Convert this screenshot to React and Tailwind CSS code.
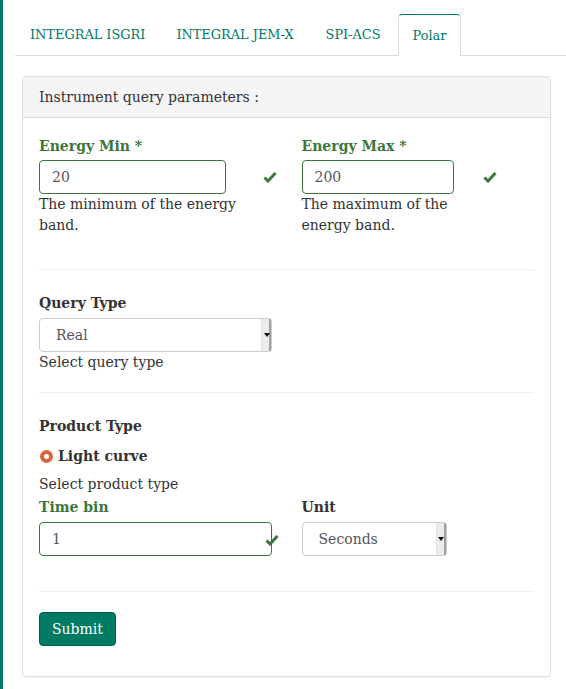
import React from "react";

const Check = ({ className }) => (
  <svg className={className} width="14" height="12" viewBox="0 0 14 12">
    <path d="M1.5 6.5 L5 10 L12.5 2" fill="none" stroke="#3c763d" strokeWidth="3" strokeLinecap="butt" strokeLinejoin="miter" />
  </svg>
);

const Select = ({ value, width }) => (
  <div className={`flex h-[34px] items-stretch rounded-[4px] border border-[#cccccc] bg-white ${width}`}>
    <div className="flex flex-1 items-center pl-[16px] text-[#555555]">{value}</div>
    <div className="flex w-[10px] items-center justify-center border-l border-[#e5e5e5] bg-[#ececec] shadow-[inset_-2px_0_0_#a0a0a0]">
      <svg width="6" height="4" viewBox="0 0 6 4"><path d="M0 0 H6 L3 4 Z" fill="#111" /></svg>
    </div>
  </div>
);

export default function App() {
  return (
    <div className="min-h-[689px] border-l-[3px] border-[#00796b] bg-white pt-[14px] text-[14px] text-[#333333]" style={{ fontFamily: '"DejaVu Serif", serif' }}>
      <div className="ml-[12px] flex h-[42px] border-b border-[#dddddd] text-[12.9px]">
        <div className="mr-[2px] flex items-center border border-transparent pl-[14px] pr-[13px] text-[#00796b]">INTEGRAL ISGRI</div>
        <div className="mr-[2px] flex items-center border border-transparent px-[14px] text-[#00796b]">INTEGRAL JEM-X</div>
        <div className="mr-[2px] flex items-center border border-transparent px-[14px] text-[#00796b]">SPI-ACS</div>
        <div className="-mb-px flex items-center rounded-t-[4px] border border-b-0 border-[#dddddd] border-t-[#00796b] bg-white px-[14px] text-[#00796b]">Polar</div>
      </div>

      <div className="ml-[19px] mr-[15px] mt-[20px] rounded-[4px] border border-[#dddddd] shadow-[0_1px_1px_rgba(0,0,0,0.05)]">
        <div className="flex h-[41px] items-center rounded-t-[4px] border-b border-[#dddddd] bg-[#f5f5f5] px-[16px]">Instrument query parameters :</div>
        <div className="px-[16px] pt-[18px] pb-[30px]">
          <div className="grid grid-cols-2 gap-[30px]">
            <div className="relative">
              <div className="font-bold leading-[20px] text-[#3c763d]">Energy Min *</div>
              <div className="mt-[4px] flex h-[34px] w-[187px] items-center rounded-[4px] border border-[#3c763d] px-[12px] text-[#555555]">20</div>
              <Check className="absolute left-[224px] top-[35px]" />
              <div className="w-[210px] leading-[21px]">The minimum of the energy band.</div>
            </div>
            <div className="relative">
              <div className="font-bold leading-[20px] text-[#3c763d]">Energy Max *</div>
              <div className="mt-[4px] flex h-[34px] w-[152px] items-center rounded-[4px] border border-[#3c763d] px-[12px] text-[#555555]">200</div>
              <Check className="absolute left-[181px] top-[35px]" />
              <div className="w-[160px] leading-[21px]">The maximum of the energy band.</div>
            </div>
          </div>

          <div className="mt-[33px] border-t border-[#eeeeee]" />

          <div className="mt-[23px] font-bold leading-[20px]">Query Type</div>
          <div className="mt-[5px]"><Select value="Real" width="w-[233px]" /></div>
          <div className="leading-[20px]">Select query type</div>

          <div className="mt-[20px] border-t border-[#eeeeee]" />

          <div className="mt-[23px] font-bold leading-[20px]">Product Type</div>
          <div className="mt-[10px] flex items-center">
            <span className="ml-[1px] flex h-[13px] w-[13px] items-center justify-center rounded-full bg-[#d9653a]">
              <span className="h-[5px] w-[5px] rounded-full bg-white" />
            </span>
            <span className="ml-[5px] font-bold">Light curve</span>
          </div>
          <div className="mt-[7px] leading-[20px]">Select product type</div>

          <div className="mt-[3px] grid grid-cols-2 gap-[30px]">
            <div className="relative">
              <div className="font-bold leading-[20px] text-[#3c763d]">Time bin</div>
              <div className="mt-[5px] flex h-[34px] w-[233px] items-center rounded-[4px] border border-[#3c763d] px-[12px] text-[#555555]">1</div>
              <Check className="absolute left-[226px] top-[37px]" />
            </div>
            <div>
              <div className="font-bold leading-[20px]">Unit</div>
              <div className="mt-[5px]"><Select value="Seconds" width="w-[145px]" /></div>
            </div>
          </div>

          <div className="mt-[35px] border-t border-[#eeeeee]" />

          <button className="mt-[20px] h-[34px] rounded-[4px] border border-[#00604f] bg-[#007b63] px-[12px] text-white">Submit</button>
        </div>
      </div>
    </div>
  );
}
